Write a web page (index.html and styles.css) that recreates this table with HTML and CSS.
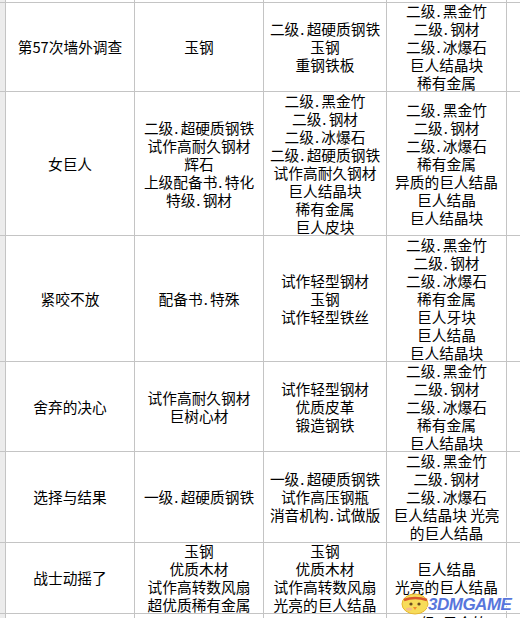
FILE: index.html
```html
<!DOCTYPE html>
<html lang="zh-CN">
<head>
<meta charset="utf-8">
<title>材料表</title>
<link rel="stylesheet" href="styles.css">
</head>
<body>
<div class="sheet">
  <div class="grid">
    <div class="hdr"></div><div class="cell"></div><div class="cell"></div><div class="cell"></div><div class="cell"></div><div class="cell"></div>

    <div class="hdr"></div>
    <div class="cell"><div class="t">第57次墙外调查</div></div>
    <div class="cell"><div class="t">玉钢</div></div>
    <div class="cell"><div class="t">二级<span class="dot">.</span>超硬质钢铁<br>玉钢<br>重钢铁板</div></div>
    <div class="cell"><div class="t">二级<span class="dot">.</span>黑金竹<br>二级<span class="dot">.</span>钢材<br>二级<span class="dot">.</span>冰爆石<br>巨人结晶块<br>稀有金属</div></div>
    <div class="cell"></div>

    <div class="hdr"></div>
    <div class="cell"><div class="t">女巨人</div></div>
    <div class="cell"><div class="t">二级<span class="dot">.</span>超硬质钢铁<br>试作高耐久钢材<br>辉石<br>上级配备书<span class="dot">.</span>特化<br>特级<span class="dot">.</span>钢材</div></div>
    <div class="cell"><div class="t">二级<span class="dot">.</span>黑金竹<br>二级<span class="dot">.</span>钢材<br>二级<span class="dot">.</span>冰爆石<br>二级<span class="dot">.</span>超硬质钢铁<br>试作高耐久钢材<br>巨人结晶块<br>稀有金属<br>巨人皮块</div></div>
    <div class="cell"><div class="t">二级<span class="dot">.</span>黑金竹<br>二级<span class="dot">.</span>钢材<br>二级<span class="dot">.</span>冰爆石<br>稀有金属<br>异质的巨人结晶<br>巨人结晶<br>巨人结晶块</div></div>
    <div class="cell"></div>

    <div class="hdr"></div>
    <div class="cell"><div class="t">紧咬不放</div></div>
    <div class="cell"><div class="t">配备书<span class="dot">.</span>特殊</div></div>
    <div class="cell"><div class="t">试作轻型钢材<br>玉钢<br>试作轻型铁丝</div></div>
    <div class="cell"><div class="t">二级<span class="dot">.</span>黑金竹<br>二级<span class="dot">.</span>钢材<br>二级<span class="dot">.</span>冰爆石<br>稀有金属<br>巨人牙块<br>巨人结晶<br>巨人结晶块</div></div>
    <div class="cell"></div>

    <div class="hdr"></div>
    <div class="cell"><div class="t">舍弃的决心</div></div>
    <div class="cell"><div class="t">试作高耐久钢材<br>巨树心材</div></div>
    <div class="cell"><div class="t">试作轻型钢材<br>优质皮革<br>锻造钢铁</div></div>
    <div class="cell"><div class="t">二级<span class="dot">.</span>黑金竹<br>二级<span class="dot">.</span>钢材<br>二级<span class="dot">.</span>冰爆石<br>稀有金属<br>巨人结晶块</div></div>
    <div class="cell"></div>

    <div class="hdr"></div>
    <div class="cell"><div class="t">选择与结果</div></div>
    <div class="cell"><div class="t">一级<span class="dot">.</span>超硬质钢铁</div></div>
    <div class="cell"><div class="t">一级<span class="dot">.</span>超硬质钢铁<br>试作高压钢瓶<br>消音机构<span class="dot">.</span>试做版</div></div>
    <div class="cell"><div class="t">二级<span class="dot">.</span>黑金竹<br>二级<span class="dot">.</span>钢材<br>二级<span class="dot">.</span>冰爆石<br>巨人结晶块 光亮<br>的巨人结晶</div></div>
    <div class="cell"></div>

    <div class="hdr"></div>
    <div class="cell"><div class="t">战士动摇了</div></div>
    <div class="cell"><div class="t">玉钢<br>优质木材<br>试作高转数风扇<br>超优质稀有金属</div></div>
    <div class="cell"><div class="t">玉钢<br>优质木材<br>试作高转数风扇<br>光亮的巨人结晶</div></div>
    <div class="cell"><div class="t">巨人结晶<br>光亮的巨人结晶</div></div>
    <div class="cell"></div>

    <div class="hdr"></div>
    <div class="cell"></div>
    <div class="cell"></div>
    <div class="cell"></div>
    <div class="cell top"><div class="t">二级<span class="dot">.</span>黑金竹</div></div>
    <div class="cell"></div>
  </div>

  <div class="watermark">
    <svg class="chick" width="34" height="26" viewBox="0 0 34 26">
      <ellipse cx="15" cy="14" rx="13" ry="10" fill="#f7dc5a" stroke="#e8b830" stroke-width="1"/>
      <path d="M4 10 Q15 6 27 10" stroke="#d8562c" stroke-width="2.4" fill="none"/>
      <circle cx="11" cy="14" r="1.6" fill="#6a4a20"/>
      <circle cx="19" cy="14" r="1.6" fill="#6a4a20"/>
      <path d="M13 17 L17 17 L15 20 Z" fill="#f08a30"/>
      <ellipse cx="9" cy="19" rx="3" ry="1.6" fill="#f6a9a0" opacity="0.7"/>
    </svg>
    <span class="wm-text">3DMGAME</span>
  </div>
</div>
</body>
</html>
```

FILE: styles.css
```css
html, body {
  margin: 0;
  padding: 0;
  background: #ffffff;
}

.sheet {
  position: relative;
  width: 520px;
  height: 618px;
  overflow: hidden;
  font-family: "Noto Sans CJK SC", "Noto Sans", sans-serif;
  font-size: 14.7px;
  color: #000000;
}

.grid {
  display: grid;
  grid-template-columns: 5px 128px 128px 122px 119px 13px;
  grid-template-rows: 2px 88px 143px 125px 89px 90px 70px 20px;
  gap: 1px;
  background: #c4c4c4;
}

.hdr {
  background: #ececec;
}

.cell {
  background: #ffffff;
  display: flex;
  flex-direction: column;
  justify-content: center;
  align-items: center;
  overflow: hidden;
}

.cell.top {
  justify-content: flex-start;
}

.t {
  text-align: center;
  line-height: 18px;
  white-space: nowrap;
}

.dot {
  display: inline-block;
  box-sizing: border-box;
  width: 0.5em;
  padding-left: 1px;
  text-align: left;
}

.watermark {
  position: absolute;
  left: 400px;
  top: 590px;
  display: flex;
  align-items: flex-end;
}

.chick {
  display: block;
}

.wm-text {
  margin-left: -6px;
  margin-bottom: 3px;
  font-family: "Liberation Sans", "DejaVu Sans", sans-serif;
  font-weight: bold;
  font-style: italic;
  font-size: 17px;
  line-height: 17px;
  color: #5876dc;
  letter-spacing: -0.5px;
  text-shadow: 1px 0 0 #fff, -1px 0 0 #fff, 0 1px 0 #fff, 0 -1px 0 #fff;
}
```
